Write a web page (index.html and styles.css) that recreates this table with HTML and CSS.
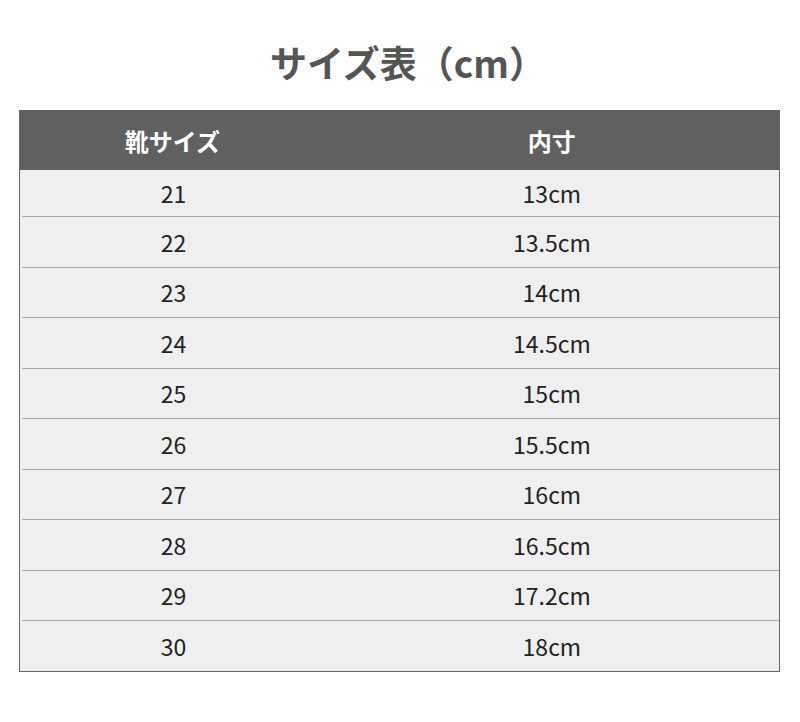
FILE: index.html
```html
<!DOCTYPE html>
<html lang="ja">
<head>
<meta charset="utf-8">
<link rel="stylesheet" href="styles.css">
</head>
<body>
<h1 class="title">サイズ表（cm）</h1>
<div class="table">
  <div class="row head"><div class="c1">靴サイズ</div><div class="c2">内寸</div></div>
  <div class="row first"><div class="c1">21</div><div class="c2">13cm</div></div>
  <div class="row"><div class="c1">22</div><div class="c2">13.5cm</div></div>
  <div class="row"><div class="c1">23</div><div class="c2">14cm</div></div>
  <div class="row"><div class="c1">24</div><div class="c2">14.5cm</div></div>
  <div class="row"><div class="c1">25</div><div class="c2">15cm</div></div>
  <div class="row"><div class="c1">26</div><div class="c2">15.5cm</div></div>
  <div class="row"><div class="c1">27</div><div class="c2">16cm</div></div>
  <div class="row"><div class="c1">28</div><div class="c2">16.5cm</div></div>
  <div class="row"><div class="c1">29</div><div class="c2">17.2cm</div></div>
  <div class="row last"><div class="c1">30</div><div class="c2">18cm</div></div>
</div>
</body>
</html>
```
FILE: styles.css
```css
html, body {
  margin: 0;
  padding: 0;
  background: #ffffff;
}
body {
  font-family: "Noto Sans CJK JP", "Noto Sans", sans-serif;
  color: #222222;
}
.title {
  margin: 37px 0 0 0;
  padding-left: 16px;
  height: 73px;
  line-height: 50px;
  font-size: 37px;
  font-weight: 700;
  color: #555555;
  text-align: center;
}
.table {
  margin: 0 20px 0 19px;
  border: 1px solid #666666;
  border-top: none;
  background: #efefef;
}
.row {
  display: flex;
  height: 50.5px;
  align-items: center;
  box-sizing: border-box;
  border-bottom: 1px solid #a8a8a8;
  margin-left: 2px;
  font-size: 23px;
}
.row.head {
  margin-left: 0;
  height: 60px;
  background: #606060;
  color: #ffffff;
  font-size: 24px;
  font-weight: 700;
  border-bottom: none;
}
.row.first {
  height: 47px;
}
.row.last {
  border-bottom: none;
  height: 49.5px;
}
.c1 {
  width: 40%;
  text-align: center;
}
.row.head .c1 {
  width: calc(40% + 1px);
}
.c2 {
  flex: 1;
  text-align: center;
}
```
